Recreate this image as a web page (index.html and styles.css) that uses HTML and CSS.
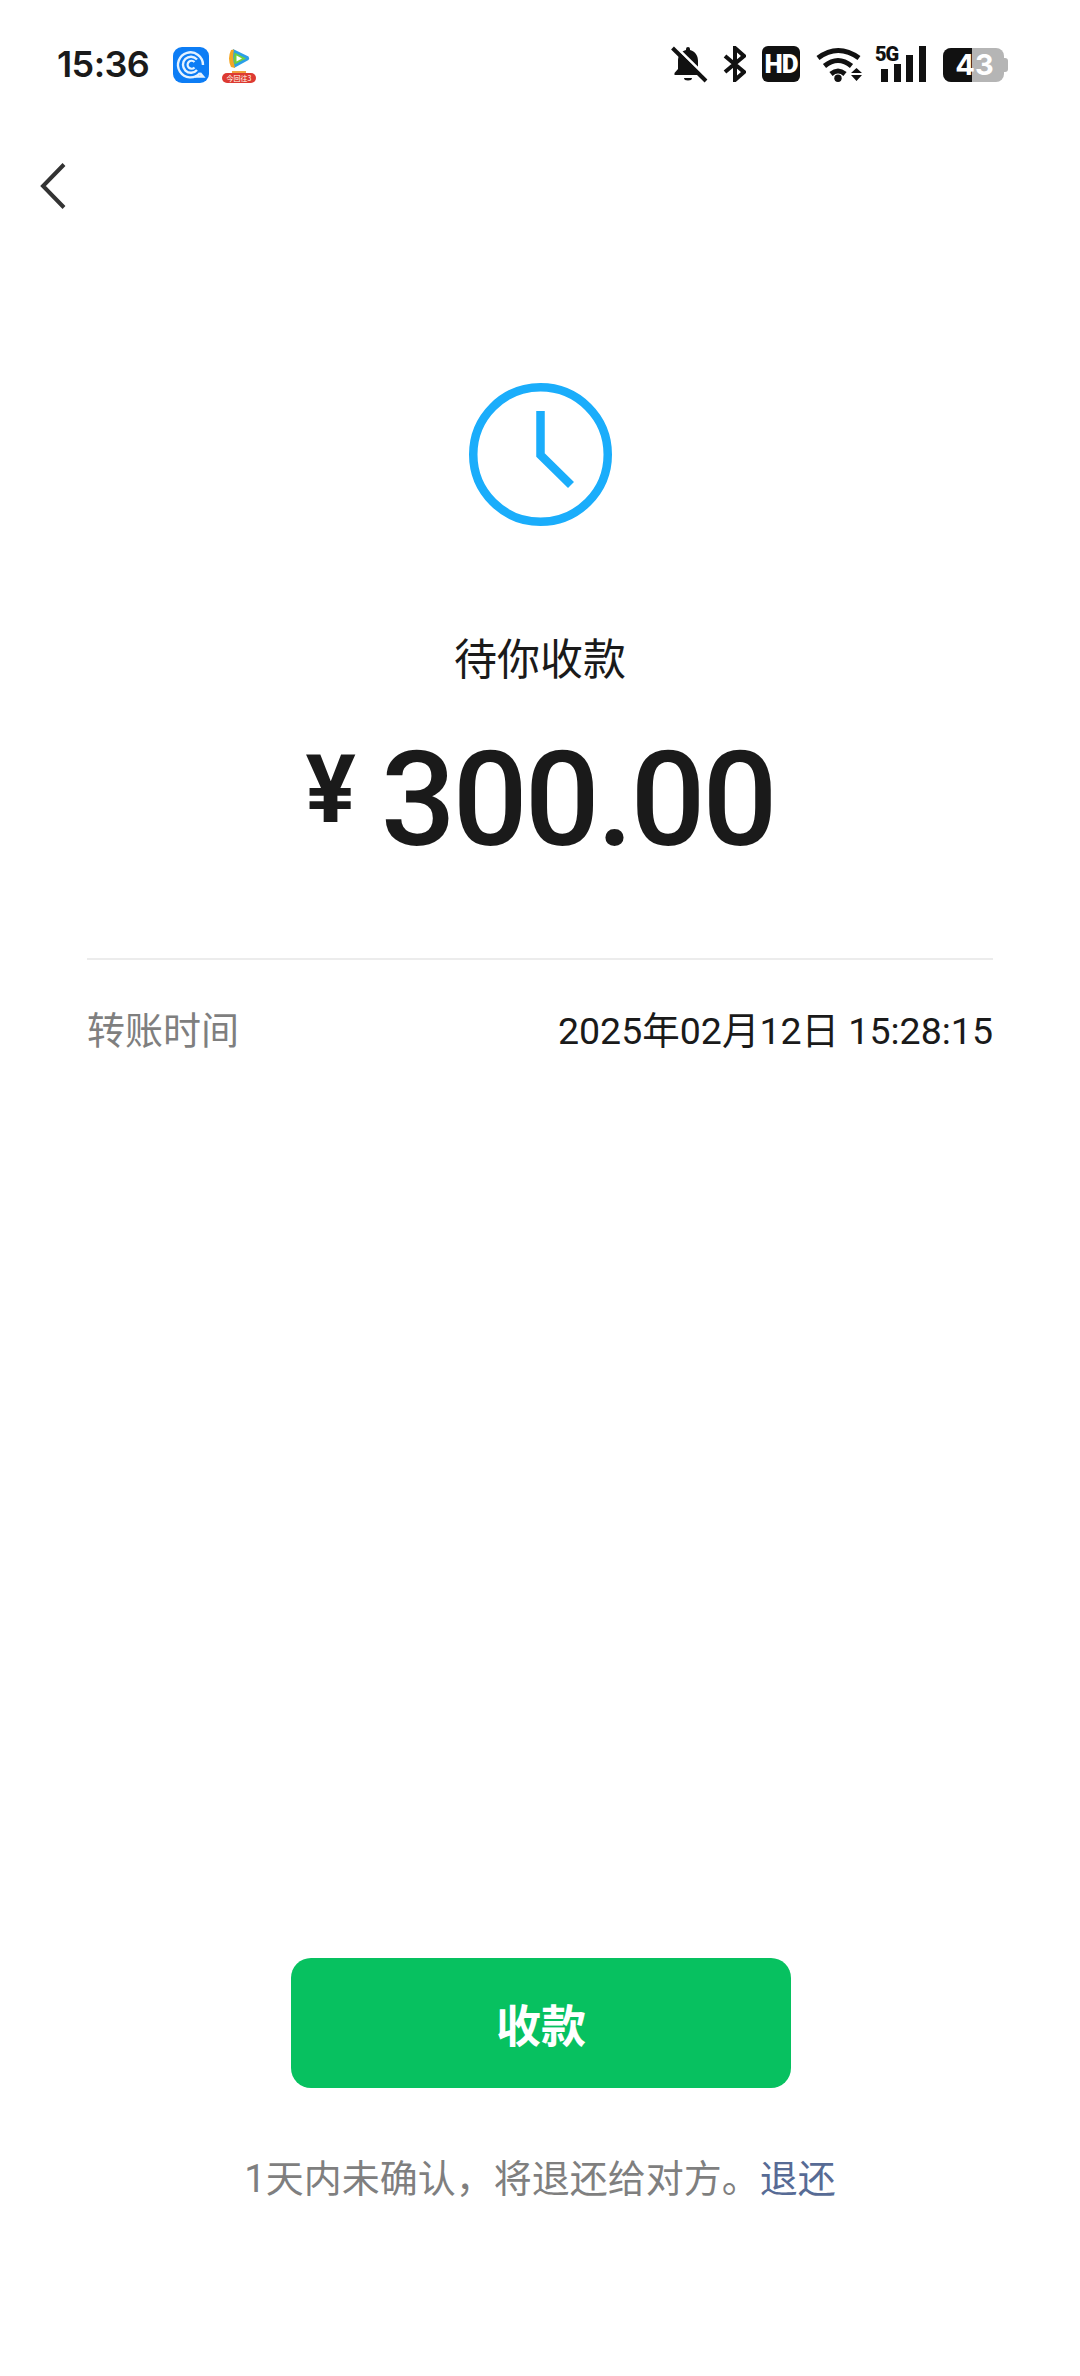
FILE: index.html
```html
<!DOCTYPE html>
<html lang="zh-CN">
<head>
<meta charset="utf-8">
<title>待你收款</title>
<link rel="stylesheet" href="styles.css">
</head>
<body>
<main class="page">
  <header class="status">
    <div class="status-left">
      <span class="time">15:36</span>
      <svg class="app-blue" viewBox="0 0 36 36">
        <rect width="36" height="36" rx="9" fill="#0d7df5"/>
        <path d="M27 26a12.500 12.500 0 1 1 3-8" fill="none" stroke="#e4f2ff" stroke-width="2.400"/>
        <path d="M24 12.500a8 8 0 1 0 0 10.500" fill="none" stroke="#e4f2ff" stroke-width="2.400"/>
        <path d="M21.500 15a4 4 0 1 0 0 5.500" fill="none" stroke="#e4f2ff" stroke-width="2.200"/>
        <path d="M22 29.500h8l-3-3.500" fill="none" stroke="#e4f2ff" stroke-width="2.400"/>
      </svg>
      <div class="app-video">
        <svg class="video-logo" viewBox="0 0 22 19">
          <path d="M5 0 L20.500 7.500 Q22 9.500 20.500 11 L6 19 Q3 9.500 5 0Z" fill="#2b9fe8"/>
          <path d="M3 1 Q-1 9.500 3 18 L7 19 Q4 9.500 6 0.500Z" fill="#f5a623"/>
          <path d="M6.500 3.500 L18 9.500 L6.500 15.500 Q5.500 9.500 6.500 3.500Z" fill="#6fd13c"/>
          <path d="M8.500 6.500 L14 9.500 L8.500 12.500 Z" fill="#fff"/>
        </svg>
        <i class="video-tab"></i>
        <span class="video-badge">今回往3</span>
      </div>
    </div>
    <div class="status-right">
      <svg class="ic-bell" viewBox="0 0 36 36">
        <path d="M14 4V3a2 2 0 0 1 4 0v1c6 1.500 8 6.500 8 11v8l3.500 4v2H2.500v-2l3.500-4v-8c0-4.500 2-9.500 8-11z" fill="#111"/>
        <path d="M12 32h8a4 2.500 0 0 1-8 0z" fill="#111"/>
        <path d="M3 0L36.500 33" stroke="#fff" stroke-width="3"/>
        <path d="M.5 2L34 35" stroke="#111" stroke-width="4"/>
      </svg>
      <svg class="ic-bt" viewBox="0 0 23 36">
        <path d="M2 10l19 16-9 8V2l9 8L2 26" fill="none" stroke="#111" stroke-width="4"/>
      </svg>
      <span class="ic-hd">HD</span>
      <svg class="ic-wifi" viewBox="0 0 46 34">
        <path d="M2 10Q22 -5 43 10M8.500 18Q22 7 35.500 18M15 26Q22 20 29 26" fill="none" stroke="#111" stroke-width="5"/>
        <circle cx="22" cy="30.300" r="3.700" fill="#111"/>
        <path d="M35 25l5.500-5 5.500 5zM35 27h11l-5.500 6z" fill="#111"/>
      </svg>
      <div class="ic-signal">
        <span class="sig-label">5G</span>
        <div class="bars">
          <i class="bar b1"></i><i class="bar b2"></i><i class="bar b3"></i><i class="bar b4"></i>
        </div>
      </div>
      <div class="ic-batt">
        <div class="batt-body"><div class="batt-fill"></div><span class="batt-num">43</span></div>
        <i class="batt-nub"></i>
      </div>
    </div>
  </header>

  <nav class="nav">
    <svg class="back" viewBox="0 0 26 46">
      <path d="M24 1.500L3 23l21 21.500" fill="none" stroke="#333" stroke-width="4"/>
    </svg>
  </nav>

  <section class="hero">
    <svg class="clock" viewBox="0 0 143 143">
      <circle cx="71.500" cy="71.500" r="67.250" fill="none" stroke="#1aadfb" stroke-width="8.500"/>
      <path d="M71.500 28v44l30.500 30" fill="none" stroke="#1aadfb" stroke-width="8.500"/>
    </svg>
    <h1 class="title">待你收款</h1>
    <div class="amount"><span class="yen">¥</span><span class="num">300.00</span></div>
  </section>

  <section class="detail">
    <div class="row">
      <span class="row-label">转账时间</span>
      <span class="row-value">2025年02月12日 15:28:15</span>
    </div>
  </section>

  <footer class="actions">
    <button class="confirm">收款</button>
    <p class="note">1天内未确认，将退还给对方。<a class="link">退还</a></p>
  </footer>
</main>
</body>
</html>
```
FILE: styles.css
```css
* { box-sizing: border-box; }
html, body { margin: 0; padding: 0; background: #fff; }
body { font-family: Roboto, "Noto Sans CJK SC", sans-serif; color: #1a1a1a; }
.page { width: 1080px; height: 2376px; display: flex; flex-direction: column; overflow: hidden; }

.status { height: 130px; padding: 46px 72px 0 57px; display: flex; justify-content: space-between; align-items: flex-start; }
.status-left { display: flex; align-items: flex-start; height: 37px; }
.time { font-family: Inter, Roboto, sans-serif; font-size: 36px; font-weight: 600; line-height: 37px; color: #1a1a1a; width: 116px; letter-spacing: -.6px; }
.app-blue { width: 36px; height: 36px; margin-top: 1px; display: block; }
.app-video { width: 34px; margin-left: 13px; display: flex; flex-direction: column; align-items: center; }
.video-logo { width: 22px; height: 19px; display: block; margin-top: 3px; }
.video-tab { width: 14px; height: 2px; margin-top: 3px; background: #f0a040; display: block; }
.video-badge { width: 34px; height: 10px; border-radius: 5px; background: #dd3a32; color: #ffe; font-family: "Noto Sans CJK SC", sans-serif; font-size: 7px; line-height: 10px; text-align: center; white-space: nowrap; overflow: hidden; }

.status-right { display: flex; align-items: flex-start; height: 37px; }
.ic-bell { width: 36px; height: 36px; display: block; overflow: visible; }
.ic-bt { width: 23px; height: 36px; margin-left: 15px; display: block; }
.ic-hd { width: 38px; height: 36px; margin-left: 16px; border-radius: 6px; background: #111; color: #fff; font-family: Roboto, sans-serif; font-weight: 900; font-size: 26px; line-height: 36px; text-align: center; letter-spacing: -1px; }
.ic-wifi { width: 46px; height: 34px; margin: 2px 0 0 16px; display: block; overflow: visible; }
.ic-signal { width: 51px; height: 36px; margin-left: 13px; position: relative; }
.sig-label { position: absolute; left: 0; top: -2px; font-family: Roboto, sans-serif; font-weight: 900; font-size: 20px; line-height: 20px; color: #111; letter-spacing: -1px; }
.bars { position: absolute; left: 6px; right: 0; bottom: 0; height: 36px; display: flex; align-items: flex-end; justify-content: space-between; }
.bar { width: 7px; background: #111; display: block; }
.b1 { height: 13px; } .b2 { height: 18px; } .b3 { height: 27px; } .b4 { height: 36px; }
.ic-batt { margin: 2px 0 0 17px; display: flex; align-items: center; height: 34px; }
.batt-body { position: relative; width: 61px; height: 34px; border-radius: 8px; background: #b5b5b5; overflow: hidden; }
.batt-fill { width: 29px; height: 34px; background: #111; }
.batt-num { position: absolute; left: 2px; right: 0; top: 0; text-align: center; color: #fff; font-family: Inter, Roboto, sans-serif; font-weight: 700; font-size: 29px; line-height: 34px; }
.batt-nub { width: 4px; height: 14px; background: #b5b5b5; border-radius: 0 3px 3px 0; display: block; }

.nav { height: 253px; padding: 33px 0 0 40px; }
.back { width: 26px; height: 46px; display: block; }

.hero { display: flex; flex-direction: column; align-items: center; }
.clock { width: 143px; height: 143px; display: block; }
.title { margin: 100px 0 0; font-family: "Noto Sans CJK SC", sans-serif; font-weight: 400; font-size: 43px; line-height: 60px; color: #1a1a1a; }
.amount { margin-top: 39px; height: 233px; display: flex; align-items: flex-start; line-height: 1; }
.yen { font-family: Roboto, sans-serif; font-weight: 700; font-size: 94px; line-height: 120px; margin: 5px 25px 0 0; }
.num { font-family: Roboto, sans-serif; font-weight: 500; font-size: 132px; line-height: 150px; letter-spacing: -3px; }

.detail { margin: 0 87px; border-top: 2px solid #ececec; padding-top: 42px; }
.row { display: flex; justify-content: space-between; align-items: center; height: 50px; }
.row-label { font-family: "Noto Sans CJK SC", sans-serif; font-size: 38px; color: #7f7f7f; }
.row-value { font-family: Roboto, "Noto Sans CJK SC", sans-serif; font-size: 37.500px; color: #1a1a1a; }

.actions { margin-top: auto; padding-bottom: 170px; display: flex; flex-direction: column; align-items: center; }
.confirm { width: 500px; height: 130px; margin-left: 2px; border: 0; border-radius: 20px; background: #07c160; color: #fff; font-family: "Noto Sans CJK SC", sans-serif; font-weight: 700; font-size: 45px; }
.note { margin: 64px 0 0; font-family: Roboto, "Noto Sans CJK SC", sans-serif; font-size: 38px; line-height: 54px; color: #7f7f7f; }
.link { color: #576b95; }
```
